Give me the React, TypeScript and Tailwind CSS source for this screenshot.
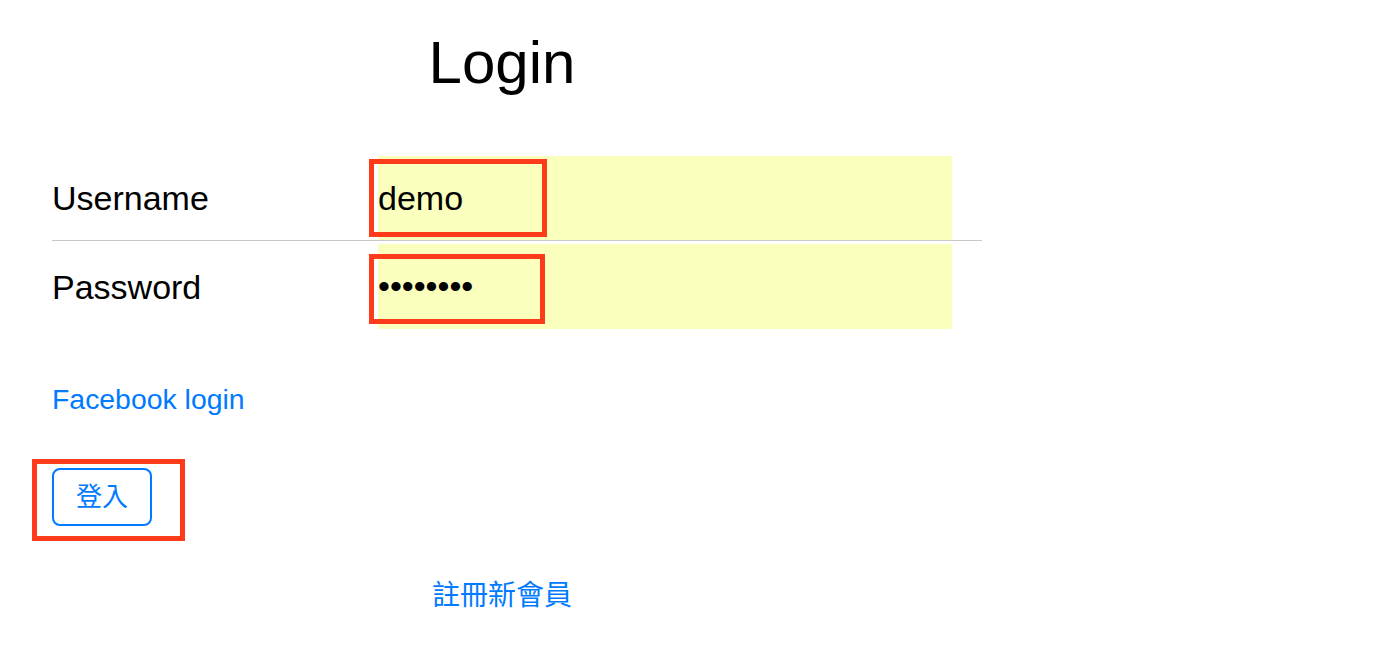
import React from 'react'

const annotate = 'pointer-events-none absolute border-[5px] border-[#fd3b1b]'

function Field({
  label,
  value,
  rowClass,
  markClass,
}: {
  label: string
  value: string
  rowClass: string
  markClass: string
}) {
  return (
    <div className={`flex items-center ${rowClass}`}>
      <label className="w-[326px] text-[34px] leading-none text-black">{label}</label>
      <div className="relative h-full">
        <input
          readOnly
          value={value}
          className="h-full w-[574px] border-0 bg-[#faffbd] p-0 text-[34px] text-black outline-none"
        />
        <div className={`${annotate} ${markClass}`} />
      </div>
    </div>
  )
}

export default function App() {
  return (
    <div className="min-h-screen w-full bg-white font-['Liberation_Sans','Noto_Sans_CJK_TC',sans-serif]">
      <div className="flex w-[1004px] flex-col pt-[33px]">
        <h1 className="text-center text-[60px] leading-[60px] text-black">Login</h1>

        <form className="mt-[63px] w-[982px] pl-[52px]" onSubmit={(e) => e.preventDefault()}>
          <div className="border-b border-[#c8c8c8]">
            <Field
              label="Username"
              value="demo"
              rowClass="h-[84px]"
              markClass="left-[-9px] top-[3px] h-[78px] w-[178px]"
            />
          </div>
          <div className="mt-[3px]">
            <Field
              label="Password"
              value="••••••••"
              rowClass="h-[85px]"
              markClass="left-[-9px] top-[10px] h-[70px] w-[176px]"
            />
          </div>

          <a href="#" className="mt-[56px] block w-fit text-[28.4px] leading-[28px] text-[#007aff]">
            Facebook login
          </a>

          <div className="relative mt-[55px] w-fit">
            <button
              type="submit"
              className="h-[58px] w-[100px] rounded-[8px] border-2 border-[#007aff] bg-white text-[26px] text-[#007aff]"
            >
              登入
            </button>
            <div className={`${annotate} left-[-20px] top-[-9px] h-[82px] w-[153px]`} />
          </div>
        </form>

        <a href="#" className="mt-[56px] self-center text-[28px] leading-[28px] text-[#007aff]">
          註冊新會員
        </a>
      </div>
    </div>
  )
}
